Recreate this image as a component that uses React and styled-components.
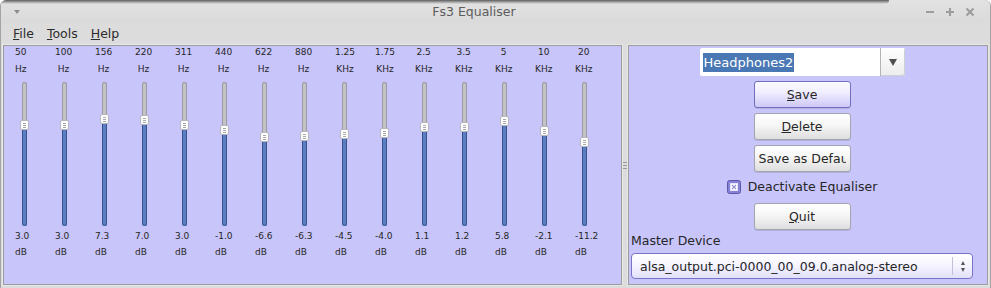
import React from 'react';
import styled, { createGlobalStyle } from 'styled-components';

const bands = [
  { freq: '50', unit: 'Hz', gain: 3.0 },
  { freq: '100', unit: 'Hz', gain: 3.0 },
  { freq: '156', unit: 'Hz', gain: 7.3 },
  { freq: '220', unit: 'Hz', gain: 7.0 },
  { freq: '311', unit: 'Hz', gain: 3.0 },
  { freq: '440', unit: 'Hz', gain: -1.0 },
  { freq: '622', unit: 'Hz', gain: -6.6 },
  { freq: '880', unit: 'Hz', gain: -6.3 },
  { freq: '1.25', unit: 'KHz', gain: -4.5 },
  { freq: '1.75', unit: 'KHz', gain: -4.0 },
  { freq: '2.5', unit: 'KHz', gain: 1.1 },
  { freq: '3.5', unit: 'KHz', gain: 1.2 },
  { freq: '5', unit: 'KHz', gain: 5.8 },
  { freq: '10', unit: 'KHz', gain: -2.1 },
  { freq: '20', unit: 'KHz', gain: -11.2 },
];

const TRACK_H = 144;
const thumbOffset = gain => Math.round(46.3 - 1.25 * gain);

const GlobalStyle = createGlobalStyle`
  html, body { margin: 0; background: #ffffff; }
  body { font-family: "DejaVu Sans", "Noto Sans", sans-serif; }
`;

const Window = styled.div`
  width: 991px;
  height: 288px;
  box-sizing: border-box;
  display: flex;
  flex-direction: column;
  background: #dcdcdc;
  border-left: 1px solid #a4a4a4;
  border-right: 1px solid #a4a4a4;
  border-radius: 6px 6px 0 0;
  overflow: hidden;
`;

const TitleBar = styled.div`
  position: relative;
  height: 23px;
  flex: none;
  display: flex;
  align-items: center;
  background: linear-gradient(#e2e2e2, #dadada);

  &::before {
    content: '';
    position: absolute;
    top: 0;
    left: 0;
    width: 888px;
    height: 4px;
    border-radius: 0 0 6px 0;
    background: linear-gradient(#5c5c5c, #9a9a9a 45%, rgba(220, 220, 220, 0));
  }
`;

const TitleLeft = styled.div`
  width: 28px;
  display: flex;
  padding-left: 13px;
  box-sizing: border-box;
`;

const MenuArrow = styled.span`
  width: 0;
  height: 0;
  border-left: 3.5px solid transparent;
  border-right: 3.5px solid transparent;
  border-top: 4px solid #8c8c8c;
`;

const Title = styled.div`
  flex: 1;
  text-align: center;
  font-size: 12.5px;
  color: #5c5c5c;
`;

const Controls = styled.div`
  width: 71px;
  display: flex;
  padding-left: 1px;
  box-sizing: border-box;
`;

const ControlSlot = styled.div`
  width: 20px;
  height: 14px;
  display: flex;
  align-items: center;
  justify-content: center;
`;

const MenuBar = styled.div`
  height: 22px;
  flex: none;
  display: flex;
  align-items: center;
  gap: 13px;
  padding-left: 12px;
  font-size: 12.5px;
  color: #2c2c2c;
`;

const MenuItem = styled.span`
  line-height: 16px;
`;

const Body = styled.div`
  flex: 1;
  display: flex;
  padding: 0 2px 3px 2px;
`;

const Panel = styled.div`
  box-sizing: border-box;
  background: #c8c5fa;
  border: 1px solid #9c9c9c;
  box-shadow: 0 0 0 1px #e8e8e8;
`;

const BandPanel = styled(Panel)`
  width: 619px;
  display: flex;
  padding-left: 11px;
`;

const Splitter = styled.div`
  width: 6px;
  display: flex;
  align-items: center;
  justify-content: center;
`;

const Grip = styled.div`
  width: 4px;
  height: 1px;
  background: #9a9a9a;
  box-shadow: 0 3px 0 #9a9a9a, 0 6px 0 #9a9a9a;
  margin-top: -6px;
`;

const Band = styled.div`
  width: 40px;
  display: flex;
  flex-direction: column;
  align-items: flex-start;
`;

const TopLabels = styled.div`
  display: flex;
  flex-direction: column;
  align-items: center;
  gap: 5px;
`;

const BottomLabels = styled.div`
  display: flex;
  flex-direction: column;
  align-items: flex-start;
  gap: 4px;
  margin-top: 4px;
`;

const Tiny = styled.span`
  font-size: 9px;
  line-height: 12px;
  color: #262626;
  white-space: nowrap;
`;

const Track = styled.div`
  position: relative;
  width: 5px;
  height: ${TRACK_H}px;
  margin: 7px 0 0 7px;
  display: flex;
  flex-direction: column;
`;

const Groove = styled.div`
  flex: none;
  box-sizing: border-box;
  background: #c3c3c6;
  border: 1px solid #9a9aa0;
  border-bottom: none;
  border-radius: 3px 3px 0 0;
`;

const Fill = styled.div`
  flex: 1;
  box-sizing: border-box;
  background: #5a7ec0;
  border: 1px solid #36558f;
  border-top: none;
  border-radius: 0 0 3px 3px;
`;

const Thumb = styled.div`
  position: absolute;
  left: -2px;
  width: 9px;
  height: 10px;
  margin-top: -5px;
  box-sizing: border-box;
  background: #ffffff;
  border: 1px solid #b6b6bc;
  border-radius: 2px;

  &::after {
    content: '';
    position: absolute;
    left: 2px;
    top: 2px;
    width: 3px;
    height: 1px;
    background: #a8a8a8;
    box-shadow: 0 2px 0 #a8a8a8, 0 4px 0 #a8a8a8;
  }
`;

const ControlPanel = styled(Panel)`
  width: 360px;
  margin-left: 0;
  display: flex;
  flex-direction: column;
  align-items: center;
  padding: 2px 14px 0 2px;
`;

const Entry = styled.div`
  width: 205px;
  height: 28px;
  box-sizing: border-box;
  display: flex;
  background: #ffffff;
  border-radius: 2px;
`;

const EntryText = styled.div`
  flex: 1;
  display: flex;
  align-items: center;
  padding-left: 3px;
`;

const Selection = styled.span`
  font-size: 13px;
  line-height: 19px;
  padding: 0 1px;
  background: #4a78b4;
  color: #ffffff;
`;

const DropButton = styled.div`
  width: 25px;
  box-sizing: border-box;
  display: flex;
  align-items: center;
  justify-content: center;
  border-left: 1px solid #b4b4b4;
  border-radius: 0 2px 2px 0;
  background: linear-gradient(#ffffff, #ececec);
  box-shadow: inset -1px -1px 0 #d0d0d0;
`;

const DownArrow = styled.span`
  width: 0;
  height: 0;
  border-left: 4px solid transparent;
  border-right: 4px solid transparent;
  border-top: 7px solid #505050;
`;

const Button = styled.div`
  width: 97px;
  height: 27px;
  margin-top: ${p => p.$gap || 5}px;
  box-sizing: border-box;
  display: flex;
  align-items: center;
  justify-content: ${p => (p.$clip ? 'flex-start' : 'center')};
  padding: 0 4px;
  border: 1px solid ${p => (p.$focus ? '#736dbd' : '#a4a4ac')};
  border-radius: 3px;
  background: ${p =>
    p.$focus
      ? 'linear-gradient(#fbfbff, #f1efff 40%, #cdc8f6)'
      : 'linear-gradient(#ffffff, #f6f6f6 45%, #dedede)'};
  box-shadow: 0 1px 0 rgba(120, 120, 150, 0.25);
  font-size: 12.5px;
  color: #262626;
`;

const ButtonLabel = styled.span`
  display: block;
  overflow: hidden;
  white-space: nowrap;
  max-width: 87px;
  line-height: 16px;
`;

const CheckRow = styled.label`
  margin-top: 8px;
  height: 13px;
  display: flex;
  align-items: center;
  gap: 7px;
  font-size: 12.5px;
  color: #262626;
`;

const FieldLabel = styled.div`
  align-self: stretch;
  margin-top: 3px;
  font-size: 12.5px;
  line-height: 16px;
  color: #262626;
`;

const DeviceCombo = styled.div`
  align-self: stretch;
  height: 26px;
  margin-top: 4px;
  box-sizing: border-box;
  display: flex;
  align-items: center;
  border: 1px solid #7a74c6;
  border-radius: 4px;
  background: linear-gradient(#ffffff, #f6f5ff 45%, #e2e0fa);
  font-size: 12.5px;
  color: #262626;
`;

const DeviceText = styled.span`
  flex: 1;
  padding-left: 8px;
  white-space: nowrap;
`;

const SpinButton = styled.div`
  width: 19px;
  height: 18px;
  border-left: 1px solid #c4c2da;
  display: flex;
  flex-direction: column;
  align-items: center;
  justify-content: center;
  gap: 3px;
  margin-right: 0;
`;

const SpinArrow = styled.span`
  width: 0;
  height: 0;
  border-left: 2.5px solid transparent;
  border-right: 2.5px solid transparent;
  ${p =>
    p.$up ? 'border-bottom: 4px solid #555;' : 'border-top: 4px solid #555;'}
`;

const WindowIcon = ({ kind }) => (
  <svg width="12" height="12" viewBox="0 0 12 12">
    {kind === 'min' && <path d="M2 6h8" stroke="#9c9c9c" strokeWidth="2" />}
    {kind === 'max' && <path d="M2 6h8M6 2v8" stroke="#9c9c9c" strokeWidth="2" />}
    {kind === 'close' && (
      <path d="M2.5 2.5l7 7M9.5 2.5l-7 7" stroke="#9c9c9c" strokeWidth="2" />
    )}
  </svg>
);

const CheckBox = () => (
  <svg width="14" height="14" viewBox="0 0 14 14">
    <rect x="0.5" y="0.5" width="13" height="13" rx="2" fill="#8581d6" stroke="#5d59a8" />
    <rect x="3.5" y="3.5" width="7" height="7" fill="#ffffff" stroke="#e6e4f8" />
    <path d="M5 5l4 4M9 5l-4 4" stroke="#9491d4" strokeWidth="1.2" />
  </svg>
);

const Slider = ({ gain }) => {
  const y = thumbOffset(gain);
  return (
    <Track>
      <Groove style={{ height: y }} />
      <Fill />
      <Thumb style={{ top: y }} />
    </Track>
  );
};

export default function App() {
  return (
    <>
      <GlobalStyle />
      <Window>
        <TitleBar>
          <TitleLeft>
            <MenuArrow />
          </TitleLeft>
          <Title>Fs3 Equaliser</Title>
          <Controls>
            <ControlSlot><WindowIcon kind="min" /></ControlSlot>
            <ControlSlot><WindowIcon kind="max" /></ControlSlot>
            <ControlSlot><WindowIcon kind="close" /></ControlSlot>
          </Controls>
        </TitleBar>
        <MenuBar>
          <MenuItem><u>F</u>ile</MenuItem>
          <MenuItem><u>T</u>ools</MenuItem>
          <MenuItem><u>H</u>elp</MenuItem>
        </MenuBar>
        <Body>
          <BandPanel>
            {bands.map(b => (
              <Band key={b.freq}>
                <TopLabels>
                  <Tiny>{b.freq}</Tiny>
                  <Tiny>{b.unit}</Tiny>
                </TopLabels>
                <Slider gain={b.gain} />
                <BottomLabels>
                  <Tiny>{b.gain.toFixed(1)}</Tiny>
                  <Tiny>dB</Tiny>
                </BottomLabels>
              </Band>
            ))}
          </BandPanel>
          <Splitter>
            <Grip />
          </Splitter>
          <ControlPanel>
            <Entry>
              <EntryText>
                <Selection>Headphones2</Selection>
              </EntryText>
              <DropButton>
                <DownArrow />
              </DropButton>
            </Entry>
            <Button $focus $gap={5}>
              <ButtonLabel><u>S</u>ave</ButtonLabel>
            </Button>
            <Button>
              <ButtonLabel><u>D</u>elete</ButtonLabel>
            </Button>
            <Button $clip>
              <ButtonLabel>Save as Default</ButtonLabel>
            </Button>
            <CheckRow>
              <CheckBox />
              Deactivate Equaliser
            </CheckRow>
            <Button $gap={10}>
              <ButtonLabel><u>Q</u>uit</ButtonLabel>
            </Button>
            <FieldLabel>Master Device</FieldLabel>
            <DeviceCombo>
              <DeviceText>alsa_output.pci-0000_00_09.0.analog-stereo</DeviceText>
              <SpinButton>
                <SpinArrow $up />
                <SpinArrow />
              </SpinButton>
            </DeviceCombo>
          </ControlPanel>
        </Body>
      </Window>
    </>
  );
}
